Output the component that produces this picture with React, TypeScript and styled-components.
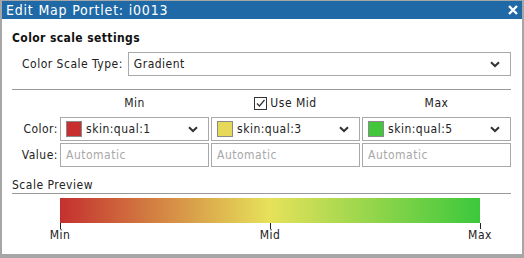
import styled, { createGlobalStyle } from 'styled-components';

const GlobalStyle = createGlobalStyle`
  body {
    margin: 0;
    background: #ffffff;
    font-family: 'DejaVu Sans Condensed', 'DejaVu Sans', sans-serif;
    color: #222222;
  }
`;

type Swatch = { label: string; color: string };

const columns: { head: string; swatch: Swatch }[] = [
  { head: 'Min', swatch: { label: 'skin:qual:1', color: '#c8302f' } },
  { head: 'Mid', swatch: { label: 'skin:qual:3', color: '#e6d95a' } },
  { head: 'Max', swatch: { label: 'skin:qual:5', color: '#42c63b' } },
];

function Chevron() {
  return (
    <svg width='10' height='7' viewBox='0 0 10 7'>
      <path d='M1 1.2 L5 5 L9 1.2' fill='none' stroke='#333' strokeWidth='2' />
    </svg>
  );
}

export default function App() {
  return (
    <>
      <GlobalStyle />
      <S.Dialog>
        <S.TitleBar>
          <S.Title>Edit Map Portlet: i0013</S.Title>
          <S.Close>
            <svg width='10' height='10' viewBox='0 0 10 10'>
              <path d='M1 1 L9 9 M9 1 L1 9' stroke='#fff' strokeWidth='2.4' />
            </svg>
          </S.Close>
        </S.TitleBar>

        <S.Body>
          <S.SectionTitle>Color scale settings</S.SectionTitle>
          <S.TypeRow>
            <S.TypeLabel>Color Scale Type:</S.TypeLabel>
            <S.Select>
              <span>Gradient</span>
              <Chevron />
            </S.Select>
          </S.TypeRow>
          <S.Rule $top={13} />

          <S.Table>
            <span />
            {columns.map((c) =>
              c.head === 'Mid' ? (
                <S.Head key={c.head}>
                  <S.Check>
                    <svg width='11' height='11' viewBox='0 0 11 11'>
                      <path d='M2 5.5 L4.5 8 L9.5 2' fill='none' stroke='#333' strokeWidth='1.2' />
                    </svg>
                  </S.Check>
                  Use Mid
                </S.Head>
              ) : (
                <S.Head key={c.head}>{c.head}</S.Head>
              ),
            )}

            <S.RowLabel>Color:</S.RowLabel>
            {columns.map((c) => (
              <S.Field key={c.head}>
                <S.Swatch $color={c.swatch.color} />
                <S.FieldText>{c.swatch.label}</S.FieldText>
                <Chevron />
              </S.Field>
            ))}

            <S.RowLabel>Value:</S.RowLabel>
            {columns.map((c) => (
              <S.Field key={c.head}>
                <S.Placeholder>Automatic</S.Placeholder>
              </S.Field>
            ))}
          </S.Table>

          <S.PreviewTitle>Scale Preview</S.PreviewTitle>
          <S.Rule $top={1} />
          <S.Preview>
            <S.Bar />
            <S.Ticks>
              {['Min', 'Mid', 'Max'].map((t) => (
                <S.Tick key={t}>
                  <S.TickMark />
                  {t}
                </S.Tick>
              ))}
            </S.Ticks>
          </S.Preview>
        </S.Body>
      </S.Dialog>
    </>
  );
}

const S = {
  Dialog: styled.div`
    width: 524px;
    height: 258px;
    box-sizing: border-box;
    border-style: solid;
    border-color: #a6a6a6;
    border-width: 1px 2px 4px 2px;
    background: #ffffff;
    display: flex;
    flex-direction: column;
    overflow: hidden;
    font-size: 12px;
    letter-spacing: 0.5px;
  `,

  TitleBar: styled.div`
    height: 18px;
    background: #1f6aa6;
    display: flex;
    align-items: center;
    justify-content: space-between;
    padding: 0 4px;
  `,

  Title: styled.span`
    color: #ffffff;
    font-size: 14px;
    line-height: 18px;
    letter-spacing: 0.8px;
  `,

  Close: styled.span`
    display: flex;
    align-items: center;
  `,

  Body: styled.div`
    padding: 11px 11px 0 10px;
    display: flex;
    flex-direction: column;
  `,

  SectionTitle: styled.div`
    font-weight: 700;
    line-height: 16px;
    letter-spacing: 0.4px;
    color: #111111;
  `,

  TypeRow: styled.div`
    display: flex;
    align-items: center;
    gap: 5px;
    margin: 6px 0 0 10px;
  `,

  TypeLabel: styled.span``,

  Select: styled.div`
    flex: 1;
    height: 24px;
    box-sizing: border-box;
    border: 1px solid #a9a9a9;
    display: flex;
    align-items: center;
    justify-content: space-between;
    padding: 0 10px 0 5px;
  `,

  Rule: styled.div<{ $top: number }>`
    height: 1px;
    background: #999999;
    margin-top: ${({ $top }) => $top}px;
  `,

  Table: styled.div`
    display: grid;
    grid-template-columns: 46px repeat(3, 149px);
    grid-template-rows: 20px 24px 24px;
    column-gap: 2px;
    row-gap: 2px;
    margin-top: 5px;
  `,

  Head: styled.div`
    display: flex;
    align-items: center;
    justify-content: center;
    gap: 3px;
    padding-bottom: 4px;
  `,

  Check: styled.span`
    width: 13px;
    height: 13px;
    box-sizing: border-box;
    border: 1px solid #333333;
    display: flex;
    align-items: center;
    justify-content: center;
  `,

  RowLabel: styled.div`
    display: flex;
    align-items: center;
    justify-content: flex-end;
  `,

  Field: styled.div`
    box-sizing: border-box;
    border: 1px solid #a9a9a9;
    display: flex;
    align-items: center;
    gap: 4px;
    padding: 0 10px 0 5px;
  `,

  Swatch: styled.span<{ $color: string }>`
    width: 16px;
    height: 16px;
    box-sizing: border-box;
    border: 1px solid #8a8a8a;
    background: ${({ $color }) => $color};
    flex-shrink: 0;
  `,

  FieldText: styled.span`
    flex: 1;
  `,

  Placeholder: styled.span`
    color: #a8a8a8;
  `,

  PreviewTitle: styled.div`
    margin-top: 11px;
    line-height: 14px;
  `,

  Preview: styled.div`
    display: flex;
    flex-direction: column;
    padding: 4px 0 0 48px;
    width: 420px;
  `,

  Bar: styled.div`
    height: 25px;
    width: 420px;
    background: linear-gradient(to right, #c4302f 0%, #e6e25a 50%, #3cc83c 100%);
  `,

  Ticks: styled.div`
    display: flex;
    justify-content: space-between;
    width: 420px;
  `,

  Tick: styled.div`
    width: 0;
    display: flex;
    flex-direction: column;
    align-items: center;
    line-height: 13px;
  `,

  TickMark: styled.span`
    width: 1px;
    height: 6px;
    background: #222222;
  `,
};
